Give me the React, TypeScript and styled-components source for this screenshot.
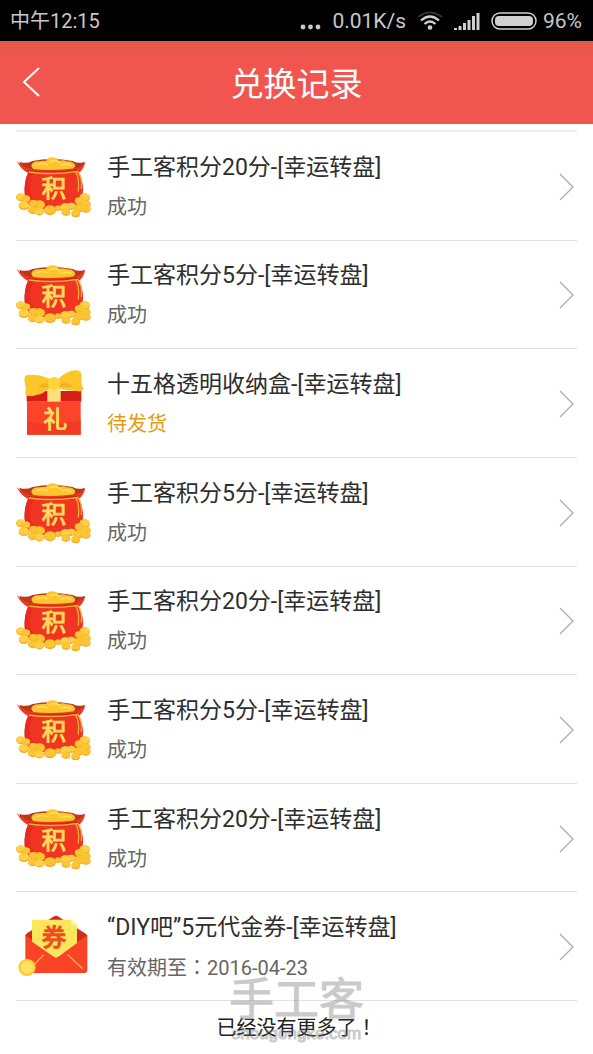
import React from 'react';
import styled, { createGlobalStyle } from 'styled-components';

const GlobalStyle = createGlobalStyle`
  * { box-sizing: border-box; }
  body {
    margin: 0;
    background: #fff;
    color: #333;
    font-family: Roboto, "Noto Sans CJK SC", sans-serif;
  }
`;

const Page = styled.div`
  overflow: hidden;
`;

const StatusBar = styled.div`
  display: flex;
  align-items: center;
  justify-content: space-between;
  height: 41px;
  padding: 0 11px 0 10px;
  background: #000;
  color: #c8c8c8;
  line-height: 24px;
`;

const Clock = styled.time`
  font-size: 20px;
`;

const StatusGroup = styled.div<{ $gap: number }>`
  display: flex;
  align-items: center;
  gap: ${(p) => p.$gap}px;
  font-size: 21px;
`;

const Header = styled.header`
  display: grid;
  grid-template-columns: 64px 1fr 64px;
  align-items: center;
  height: 83px;
  background: linear-gradient(#e5564b, #f0564f 16px);
  border-bottom: 1px solid #e4584d;
`;

const BackButton = styled.button`
  display: flex;
  align-items: center;
  height: 64px;
  padding: 0 0 0 22px;
  border: 0;
  background: none;
  color: #fff;
`;

const Heading = styled.h1`
  margin: 0;
  padding-top: 6px;
  font-size: 33px;
  line-height: 48px;
  font-weight: 400;
  text-align: center;
  color: #fff;
`;

const List = styled.ul`
  display: grid;
  grid-auto-rows: 1fr;
  min-height: 871px;
  margin: 6px 16px 0;
  padding: 0;
  list-style: none;
  border-top: 2px solid #efeeea;
`;

const Row = styled.li`
  display: flex;
  border-bottom: 1px solid #e2e2e2;
`;

const RowLink = styled.a`
  display: flex;
  flex: 1;
  align-items: center;
  padding: 2px 3px 0 0;
  color: inherit;
  text-decoration: none;
`;

const RowText = styled.div`
  flex: 1;
  min-width: 0;
  padding-left: 15px;
`;

const RowTitle = styled.div`
  font-size: 23px;
  line-height: 40px;
  color: #2e2e2e;
`;

const RowStatus = styled.div<{ $pending?: boolean }>`
  font-size: 20px;
  line-height: 38px;
  color: ${(p) => (p.$pending ? '#e69a12' : '#666')};
`;

/* Full-width punctuation centred in its square. */
const Punctuation = styled.span`
  font-family: "Noto Sans CJK TC", sans-serif;
`;

const Footer = styled.footer`
  position: relative;
  padding: 11px 0 12px;
  text-align: center;
`;

const EndNote = styled.p`
  margin: 0;
  font-size: 20px;
  line-height: 30px;
  color: #222;
`;

const Watermark = styled.div`
  position: absolute;
  top: -25px;
  left: 0;
  right: 0;
  color: #777;
  opacity: 0.38;
  pointer-events: none;
`;

const WatermarkName = styled.div`
  font-size: 45px;
  line-height: 50px;
  -webkit-text-stroke: 1px #777;
`;

const WatermarkSite = styled.div`
  font: 17px/16px "Liberation Sans", sans-serif;
  -webkit-text-stroke: 1px #777;
`;

const Glyph = styled.text`
  font-family: "Noto Sans CJK SC", sans-serif;
  font-weight: 400;
  text-anchor: middle;
`;

const coins: [number, number, number][] = [
  [38, 157, 14], [54, 162, 13], [94, 180, 17], [48, 182, 16], [76, 176, 13],
  [74, 196, 14], [94, 200, 14], [126, 196, 18], [150, 190, 10],
  [230, 158, 16], [214, 168, 14], [234, 178, 14], [190, 184, 13],
  [212, 190, 15], [234, 192, 14], [172, 188, 16], [174, 202, 13], [203, 206, 13],
];

const CoinSack = () => (
  <svg width="76" height="76" viewBox="24 12 228 228" aria-hidden="true">
    <path d="M34 50 Q52 58 74 48 Q130 36 194 48 Q212 58 230 50 Q228 64 216 72 L202 78 H62 L46 70 Q36 62 34 50Z" fill="#b9371b" />
    <path d="M70 64 Q70 49 94 49 Q104 46 114 48 Q118 37 132 37 Q148 37 152 47 Q168 43 176 49 Q200 49 202 64 L190 78 H80Z" fill="#fcc52f" />
    <path d="M88 59 Q104 52 118 59 M126 50 Q142 42 156 53 M160 61 Q176 53 188 62" fill="none" stroke="#ffde5c" strokeWidth="5" strokeLinecap="round" />
    <path d="M26 48 Q44 66 66 71 Q134 79 202 70 Q222 66 232 50 Q228 72 212 84 Q230 118 224 148 Q218 182 192 192 H82 Q54 178 50 146 Q48 108 60 84 Q38 72 26 48Z" fill="#f03522" />
    <path d="M60 84 Q48 108 50 146 Q54 178 82 192 H104 Q66 168 66 128 Q66 104 76 88Z" fill="#e72b20" />
    <path d="M62 77 Q132 87 208 75" fill="none" stroke="#bd2d19" strokeWidth="4" />
    <path d="M64 81 Q132 91 208 79 M202 80 Q215 96 211 138 M209 79 Q224 98 220 130" fill="none" stroke="#f8ae32" strokeWidth="4" strokeLinecap="round" />
    {coins.map(([x, y, r], i) => (
      <g key={i}>
        <ellipse cx={x} cy={y} rx={r} ry={r * 0.82} fill="#f6ac22" />
        <ellipse cx={x} cy={y - 2} rx={r - 1} ry={r * 0.68} fill={i % 3 ? '#fdc434' : '#ffd043'} />
      </g>
    ))}
    <Glyph x="138" y="157" fontSize="73" fill="#ffdc5a" stroke="#ffdc5a" strokeWidth="3">积</Glyph>
  </svg>
);

const GiftBox = () => (
  <svg width="76" height="76" viewBox="24 19 228 228" aria-hidden="true">
    <path d="M56 94 H220 V126 H56Z" fill="#d41f16" />
    <path d="M57 126 H218 V225 H57Z" fill="#fb4429" />
    <path d="M57 184 Q134 204 218 180 V225 H57Z" fill="#f33b23" />
    <path d="M118 84 H158 V126 H118Z" fill="#fee07a" />
    <path d="M126 58 Q92 42 58 46 Q46 48 50 66 Q55 84 52 104 Q62 114 84 106 Q108 102 126 84Z" fill="#fcc62b" />
    <path d="M150 58 Q180 30 206 32 Q224 34 220 56 Q218 74 227 88 Q222 98 206 94 Q178 96 150 84Z" fill="#fcc62b" />
    <path d="M122 66 Q106 70 88 82 Q104 86 124 82Z M152 68 Q178 68 196 80 Q174 84 150 80Z" fill="#f3b222" />
    <circle cx="138" cy="71" r="19" fill="#ffd638" />
    <Glyph x="142" y="204" fontSize="72" fill="#ffdf5f" stroke="#ffdf5f" strokeWidth="3">礼</Glyph>
  </svg>
);

const Voucher = () => (
  <svg width="76" height="76" viewBox="24 16 228 228" aria-hidden="true">
    <path d="M52 98 Q52 92 58 88 L136 39 Q144 34 152 39 L230 88 Q238 92 238 98 L144 160Z" fill="#d02d20" />
    <path d="M52 94 L144 162 L238 94 V198 Q238 208 228 208 H62 Q52 208 52 198Z" fill="#fb4328" />
    <path d="M72 48 H190 L207 64 V118 L154 157 Q144 164 134 157 L72 114Z" fill="#fde55c" />
    <path d="M190 48 V64 H207Z" fill="#fff3a6" />
    <path d="M106 154 L78 184 M180 154 L222 194" fill="none" stroke="#ffad4c" strokeWidth="4" strokeLinecap="round" />
    <circle cx="57" cy="191" r="26" fill="#fbcb35" />
    <circle cx="57" cy="191" r="19" fill="#ffe164" stroke="#fbd84e" strokeWidth="3" />
    <Glyph x="138" y="126" fontSize="72" fill="#f04d22" stroke="#f04d22" strokeWidth="4">券</Glyph>
  </svg>
);

const Chevron = () => (
  <svg width="15" height="28" viewBox="0 0 15 28" fill="none" stroke="#aaa" strokeWidth="1.3" aria-hidden="true">
    <path d="M1 1 L14 14 L1 27" />
  </svg>
);

const icons = { points: CoinSack, gift: GiftBox, voucher: Voucher };

type RecordItem = { kind: keyof typeof icons; title: string; status: React.ReactNode; pending?: boolean };

const records: RecordItem[] = [
  { kind: 'points', title: '手工客积分20分-[幸运转盘]', status: '成功' },
  { kind: 'points', title: '手工客积分5分-[幸运转盘]', status: '成功' },
  { kind: 'gift', title: '十五格透明收纳盒-[幸运转盘]', status: '待发货', pending: true },
  { kind: 'points', title: '手工客积分5分-[幸运转盘]', status: '成功' },
  { kind: 'points', title: '手工客积分20分-[幸运转盘]', status: '成功' },
  { kind: 'points', title: '手工客积分5分-[幸运转盘]', status: '成功' },
  { kind: 'points', title: '手工客积分20分-[幸运转盘]', status: '成功' },
  {
    kind: 'voucher',
    title: '“DIY吧”5元代金券-[幸运转盘]',
    status: <>有效期至<Punctuation lang="zh-TW">：</Punctuation>2016-04-23</>,
  },
];

const MoreDots = () => (
  <svg width="21" height="24" viewBox="0 0 21 24" fill="#c8c8c8" aria-hidden="true">
    <circle cx="3" cy="18" r="2.4" />
    <circle cx="10.5" cy="18" r="2.4" />
    <circle cx="18" cy="18" r="2.4" />
  </svg>
);

const Wifi = () => (
  <svg width="26" height="20" viewBox="0 0 26 20" fill="none" aria-hidden="true">
    <path d="M1 6 Q13 -3 25 6" stroke="#333" strokeWidth="2" />
    <path d="M4 9.5 Q13 1.5 22 9.5" stroke="#d0d0d0" strokeWidth="2.2" />
    <path d="M7.5 13 Q13 8 18.5 13" stroke="#d0d0d0" strokeWidth="2.2" />
    <circle cx="13" cy="16.5" r="2.3" fill="#d0d0d0" />
  </svg>
);

const Signal = () => (
  <svg width="26" height="20" viewBox="0 0 26 20" fill="#d0d0d0" aria-hidden="true">
    <path d="M0 17h3v2H0z M4.5 15h3v4h-3z M9 12h3v7H9z M13.5 9h3v10h-3z M18 5h3v14h-3z M22.5 2h3v17h-3z" />
  </svg>
);

const Battery = () => (
  <svg width="46" height="18" viewBox="0 0 46 18" aria-hidden="true">
    <rect x="1" y="1" width="44" height="16" rx="8" fill="none" stroke="#d0d0d0" strokeWidth="1.5" />
    <rect x="4" y="4" width="38" height="10" rx="4" fill="#d0d0d0" />
  </svg>
);

export default function App() {
  return (
    <Page>
      <GlobalStyle />
      <StatusBar>
        <Clock>中午12:15</Clock>
        <StatusGroup $gap={11}>
          <MoreDots />
          <span>0.01K/s</span>
          <Wifi />
          <Signal />
          <StatusGroup $gap={6}>
            <Battery />
            <span>96%</span>
          </StatusGroup>
        </StatusGroup>
      </StatusBar>
      <Header>
        <BackButton type="button" aria-label="返回">
          <svg width="18" height="32" viewBox="0 0 18 32" fill="none" stroke="currentColor" strokeWidth="2" aria-hidden="true">
            <path d="M17 2 L2 16 L17 30" />
          </svg>
        </BackButton>
        <Heading>兑换记录</Heading>
      </Header>
      <main>
        <List>
          {records.map((item, i) => {
            const Icon = icons[item.kind];
            return (
              <Row key={i}>
                <RowLink href="#">
                  <Icon />
                  <RowText>
                    <RowTitle>{item.title}</RowTitle>
                    <RowStatus $pending={item.pending}>{item.status}</RowStatus>
                  </RowText>
                  <Chevron />
                </RowLink>
              </Row>
            );
          })}
        </List>
      </main>
      <Footer>
        <EndNote>已经没有更多了<Punctuation lang="zh-TW">！</Punctuation></EndNote>
        <Watermark aria-hidden="true">
          <WatermarkName>手工客</WatermarkName>
          <WatermarkSite>shougongke.com</WatermarkSite>
        </Watermark>
      </Footer>
    </Page>
  );
}
